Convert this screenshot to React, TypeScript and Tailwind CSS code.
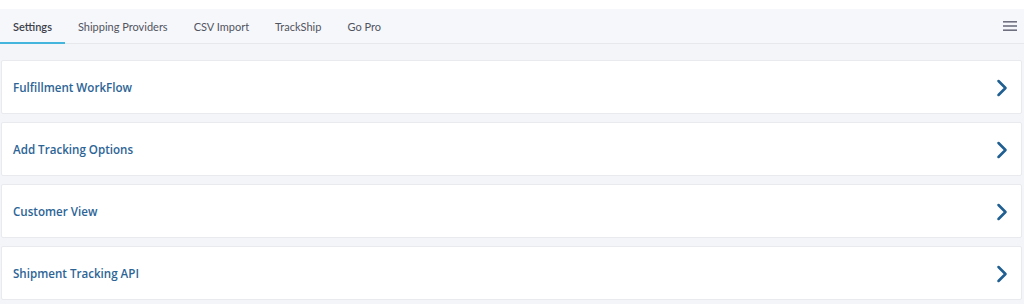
import { ChevronRight } from "lucide-react";

const tabs = ["Settings", "Shipping Providers", "CSV Import", "TrackShip", "Go Pro"];

const sections = [
  "Fulfillment WorkFlow",
  "Add Tracking Options",
  "Customer View",
  "Shipment Tracking API",
];

export default function App() {
  return (
    <div
      className="h-[304px] w-[1024px] overflow-hidden bg-white"
      style={{ fontFamily: '"Open Sans", "Noto Sans", sans-serif' }}
    >
      {/* Tabs */}
      <div className="mt-[9px] flex h-[35px] items-stretch border-b border-[#e6e8ec] bg-[#f6f7fa]">
        {tabs.map((t, i) => (
          <div
            key={t}
            className={
              "relative flex items-center px-[13px] pt-[2px] font-['Lato',sans-serif] text-[11px] " +
              (i === 0 ? "font-semibold text-[#3c3f4a]" : "text-[#51545f]")
            }
          >
            {t}
            {i === 0 && (
              <span className="absolute bottom-[-1px] left-0 right-0 h-[2px] bg-[#44b5dc]" />
            )}
          </div>
        ))}
        <div className="ml-auto flex items-center pr-[7px]">
          <svg width="14" height="12" viewBox="0 0 14 12">
            <rect x="0" y="1" width="14" height="1.6" fill="#6e7080" />
            <rect x="0" y="5.2" width="14" height="1.6" fill="#6e7080" />
            <rect x="0" y="9.4" width="14" height="1.6" fill="#6e7080" />
          </svg>
        </div>
      </div>

      {/* Sections */}
      <div className="flex h-[260px] flex-col gap-[8px] bg-[#f4f5f8] pl-[1px] pr-[2px] pt-[16px]">
        {sections.map((s) => (
          <div
            key={s}
            className="flex h-[54px] items-center justify-between rounded-[2px] border border-[#e8eaee] bg-white pl-[11px] pr-[5px] pt-[2px]"
          >
            <span className="text-[11.6px] font-semibold text-[#2c6496]">{s}</span>
            <ChevronRight size={28} strokeWidth={2.2} className="text-[#1f5f92]" />
          </div>
        ))}
      </div>
    </div>
  );
}
